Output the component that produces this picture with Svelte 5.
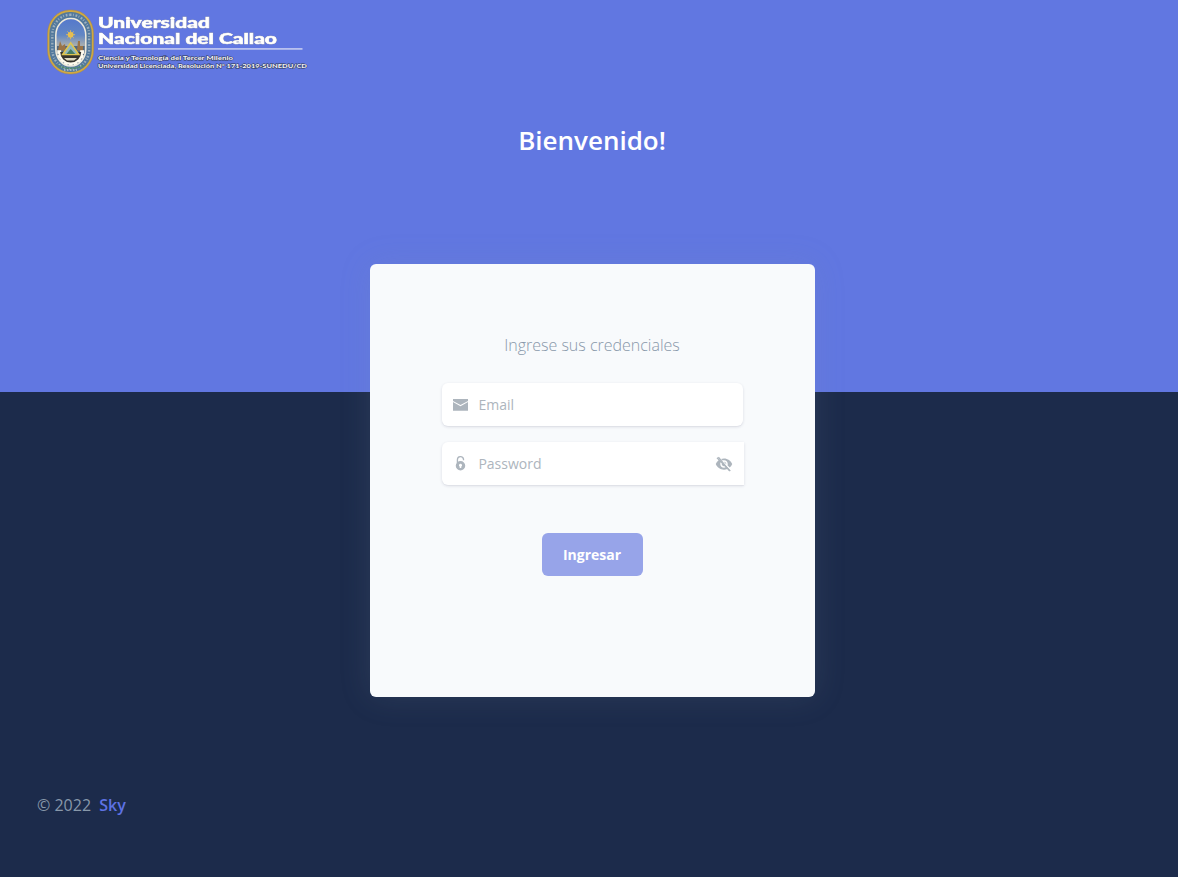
<script>
  let email = $state('');
  let password = $state('');
  const teeth = Array.from({ length: 9 }, (_, i) => i * 22.5 - 90);
</script>

<div class="page">
  <header>
    <svg class="logo" width="262" height="66" viewBox="0 0 262 66" role="img" aria-label="Universidad Nacional del Callao">
      <defs>
        <linearGradient id="sky" x1="0" y1="0" x2="0" y2="1">
          <stop offset="0" stop-color="#5478cc" />
          <stop offset=".35" stop-color="#6287c4" />
          <stop offset=".55" stop-color="#a3abb0" />
        </linearGradient>
      </defs>
      <rect x=".5" y="1" width="46.2" height="64" rx="22" ry="24" fill="#d2a940" stroke="#a3864c" stroke-width=".5" />
      <rect x="2.4" y="3" width="42.4" height="60" rx="20" ry="22" fill="#53799c" />
      <rect x="5.3" y="5.8" width="36.8" height="54.2" rx="17.5" ry="20" fill="none" stroke="#b4c2cb" stroke-width="2.4" stroke-dasharray="1.7 1.5 .8 1.8" opacity=".75" />
      <rect x="8.8" y="9.5" width="30" height="47.5" rx="14.5" ry="17" fill="url(#sky)" stroke="#eeeadc" stroke-width="1.5" />
      <path d="M10 37h27.6v6a14 14 0 0 1-27.6 0z" fill="#50677e" />
      <path d="M11 41l2-9 2 5 3-2 1 7zM30 41l1-9h2v5h3v6z" fill="#9a7447" />
      <circle cx="23.6" cy="25.7" r="2.8" fill="#f1c63c" />
      <path d="M23.6 21.2v9M19.1 25.7h9M20.4 22.5l6.4 6.4M26.8 22.5l-6.4 6.4" stroke="#e3bb5a" stroke-width=".9" />
      <g transform="translate(23.7 43)">
        {#each teeth as angle}
          <rect x="-1.8" y="9.5" width="3.6" height="4" fill="#fffbed" transform="rotate({angle})" />
        {/each}
        <path d="M-11.5 0a11.5 11.5 0 0 0 23 0" fill="#35332c" stroke="#fffbed" stroke-width="2" />
      </g>
      <path d="M23.7 34l8 11.5h-16z" fill="#8fb6bd" stroke="#dfc54f" stroke-width="1.6" />
      <path d="M19.5 45l4.2-5 4.5 5z" fill="#467d65" />
      <path d="M17 49h13l-3 2.5h-7z" fill="#ded9bf" />
      <path d="M11 56.5q12.7 6 25.5 0" fill="none" stroke="#508c6c" stroke-width="1.6" stroke-dasharray="3 1" />
      <path d="M17 61h13" stroke="#b9c4c8" stroke-width="1.4" stroke-dasharray="1.5 1.5" />
      <g class="title">
        <text x="51" y="19.3" textLength="112" lengthAdjust="spacingAndGlyphs">Universidad</text>
        <text x="51" y="34.7" textLength="179" lengthAdjust="spacingAndGlyphs">Nacional del Callao</text>
      </g>
      <rect x="51" y="39" width="204.5" height="1.8" fill="#b9c1ef" />
      <g class="motto">
        <text x="51" y="50.5" textLength="135" lengthAdjust="spacingAndGlyphs">Ciencia y Tecnología del Tercer Milenio</text>
        <text x="51" y="58.6" textLength="209" lengthAdjust="spacingAndGlyphs">Universidad Licenciada, Resolución N° 171-2019-SUNEDU/CD</text>
      </g>
    </svg>
    <h1>Bienvenido!</h1>
  </header>

  <main>
    <p>Ingrese sus credenciales</p>
    <form onsubmit={(e) => e.preventDefault()}>
      <label class="field">
        <svg width="15" height="15" viewBox="0 0 15 15" fill="#adb5bd"><path d="M0 1.9h15v2L7.5 8.1 0 3.9zM0 5.1l7.5 4.1L15 5.1v8.6H0z" /></svg>
        <input type="email" placeholder="Email" aria-label="Email" bind:value={email} />
      </label>
      <label class="field secret">
        <svg width="15" height="15" viewBox="0 0 15 15"><path d="M4.4 7V3.7a3.1 3.1 0 0 1 6.1-.7v1.2" fill="none" stroke="#adb5bd" stroke-width="1.3" /><path fill="#adb5bd" fill-rule="evenodd" d="M7.5 5a4.75 4.75 0 1 1 0 9.5 4.75 4.75 0 0 1 0-9.5zm0 2.8a1.5 1.5 0 0 0-.8 2.8V12h1.6v-1.4a1.5 1.5 0 0 0-.8-2.8z" /></svg>
        <input type="password" placeholder="Password" aria-label="Password" bind:value={password} />
        <svg class="eye" width="18" height="18" viewBox="0 0 24 24" fill="#adb5bd"><path d="M12 7c2.76 0 5 2.24 5 5 0 .65-.13 1.26-.36 1.83l2.92 2.92c1.51-1.26 2.7-2.89 3.43-4.75-1.73-4.39-6-7.5-11-7.5-1.4 0-2.74.25-3.98.7l2.16 2.16C10.74 7.13 11.35 7 12 7zM2 4.27l2.74 2.74C3.08 8.3 1.78 10.02 1 12c1.73 4.39 6 7.5 11 7.5 1.55 0 3.03-.3 4.38-.84L19.73 22 21 20.73 3.27 3 2 4.27zM7.53 9.8l1.55 1.55c-.05.21-.08.43-.08.65 0 1.66 1.34 3 3 3 .22 0 .44-.03.65-.08l1.55 1.55c-.67.33-1.41.53-2.2.53-2.76 0-5-2.24-5-5 0-.79.2-1.53.53-2.2zm4.31-.78 3.15 3.15.02-.16c0-1.66-1.34-3-3-3l-.17.01z" /><path d="M4.5 2.8l15 18.4" stroke="#adb5bd" stroke-width="1.8" /></svg>
      </label>
      <button type="submit">Ingresar</button>
    </form>
  </main>

  <footer>© 2022 <a href="#sky">Sky</a></footer>
</div>

<style>
  :global(body) { margin: 0; background: #1c2b4b; }
  .page {
    box-sizing: border-box;
    height: 877px;
    overflow: hidden;
    background: linear-gradient(#6177e1 392px, #1c2b4b 392px);
    font-family: "Open Sans", sans-serif;
    display: flex;
    flex-direction: column;
  }
  header { height: 264px; box-sizing: border-box; padding-top: 9px; }
  .logo { display: block; margin-left: 47px; }
  .title { font: 900 14.5px Lato, sans-serif; fill: #fff; stroke: #fff; stroke-width: .6px; filter: drop-shadow(.6px .7px .3px #343b64); }
  .motto { font: 900 6.3px Lato, sans-serif; fill: #f1f2fb; stroke: #303750; stroke-width: 1px; paint-order: stroke; }
  h1 { margin: 48px 0 0 6px; font-size: 26px; line-height: 34px; font-weight: 600; color: #fff; text-align: center; }
  main {
    box-sizing: border-box;
    width: 445px;
    height: 433px;
    margin-left: 370px;
    padding: 69px 73px 0 72px;
    flex: none;
    border-radius: 6px;
    background: #f8fafc;
    box-shadow: 0 0 32px rgba(136, 152, 170, .15);
  }
  p { margin: 0 0 26px; text-align: center; font-size: 16px; line-height: 24px; font-weight: 300; color: #8898aa; }
  form { display: flex; flex-direction: column; align-items: center; }
  .field {
    box-sizing: border-box;
    width: 301px;
    height: 43px;
    display: flex;
    align-items: center;
    align-self: flex-start;
    margin-bottom: 16px;
    padding: 0 11px;
    border-radius: 6px;
    background: #fff;
    box-shadow: 0 1px 3px rgba(50, 50, 93, .15), 0 1px 0 rgba(0, 0, 0, .02);
  }
  .field svg { flex: none; }
  .secret { width: 302px; border-radius: 6px 0 0 6px; }
  input { flex: 1; min-width: 0; padding: 0; margin-left: 10.4px; border: 0; outline: 0; background: none; font: 400 14px "Open Sans", sans-serif; color: #8898aa; }
  input::placeholder { color: #adb5bd; opacity: 1; }
  button { width: 101px; height: 43px; margin: 32px 0 0; padding: 0; border: 0; border-radius: 6px; background: #97a4e9; color: #fff; font: 700 14px "Open Sans", sans-serif; }
  footer { margin: 96px 0 0 37px; font-size: 16px; line-height: 24px; color: #8898aa; }
  a { margin-left: 4px; font-weight: 600; color: #5e72e4; text-decoration: none; }
</style>
